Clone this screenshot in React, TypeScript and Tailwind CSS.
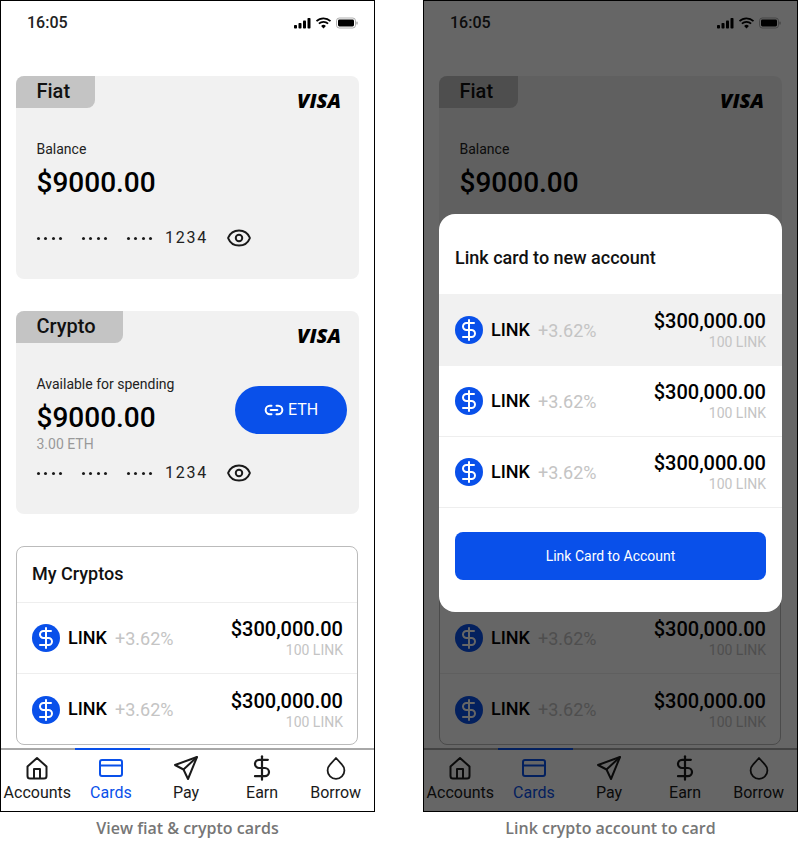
import { DollarSign, Eye, Link2 } from 'lucide-react';

function CoinIcon() {
  return (
    <div className="w-[28px] h-[28px] rounded-full bg-[#0950ea] flex items-center justify-center shrink-0">
      <DollarSign className="w-[24px] h-[24px] text-white" strokeWidth={2} />
    </div>
  );
}

function AssetRow({ className = '' }: { className?: string }) {
  return (
    <div className={`flex items-center justify-between ${className}`}>
      <div className="flex items-center">
        <CoinIcon />
        <span className="ml-[8px] pb-[2px] text-[18px] font-medium text-black">LINK</span>
        <span className="ml-[8px] text-[18px] text-[#c4c4c4]">+3.62%</span>
      </div>
      <div className="flex flex-col items-end">
        <span className="text-[20px] leading-[23px] font-medium text-black">$300,000.00</span>
        <span className="mt-[1px] text-[14px] leading-[16px] text-[#c4c4c4]">100 LINK</span>
      </div>
    </div>
  );
}

function CardNumber() {
  return (
    <div className="flex items-center h-[24px]">
      {[0, 1, 2].map((group) => (
        <div key={group} className="flex gap-[4.33px] mr-[20px]">
          {[0, 1, 2, 3].map((dot) => (
            <span key={dot} className="w-[3px] h-[3px] rounded-full bg-[#1a1a1a]" />
          ))}
        </div>
      ))}
      <span className="-ml-[7px] text-[16px] tracking-[1.8px] text-[#222]">1234</span>
      <Eye className="ml-[18px] w-[26px] h-[26px] text-[#1a1a1a]" strokeWidth={1.8} />
    </div>
  );
}

function BalanceCard({ tab, tabWidth, label, sub, action }: { tab: string; tabWidth: string; label: string; sub?: string; action?: boolean }) {
  return (
    <div className="h-[203px] bg-[#f1f1f1] rounded-[8px] overflow-hidden shrink-0">
      <div className="flex justify-between items-start">
        <div className={`h-[32px] ${tabWidth} bg-[#c4c4c4] rounded-br-[8px] pl-[20.5px] text-[20px] leading-[30px] font-medium text-[#111]`}>{tab}</div>
        <span className="mt-[13px] mr-[18px] font-['Open_Sans'] text-[20px] leading-[24px] font-extrabold italic text-black">VISA</span>
      </div>
      <div className="flex justify-between pl-[20.5px] pr-[12px] mt-[-3px]">
        <div className="pt-[31px]">
          <div className="text-[14px] leading-[16px] text-[#222]">{label}</div>
          <div className="mt-[9px] text-[28px] leading-[34px] font-medium text-black">$9000.00</div>
          <div className="h-[16px] mt-[1px] text-[14px] leading-[16px] text-[#999]">{sub}</div>
        </div>
        {action && (
          <button className="mt-[41px] w-[112px] h-[48px] rounded-full bg-[#0950ea] text-white flex items-center justify-center gap-[4px] text-[16px]">
            <Link2 className="w-[20px] h-[20px]" strokeWidth={2.4} />
            ETH
          </button>
        )}
      </div>
      <div className="pl-[21px] mt-[9px]">
        <CardNumber />
      </div>
    </div>
  );
}

function StatusIcons() {
  return (
    <svg width="64" height="12" viewBox="0 0 64 12" className="text-black">
      <rect x="0" y="8" width="3" height="3.5" rx="0.8" fill="currentColor" />
      <rect x="4.5" y="6" width="3" height="5.5" rx="0.8" fill="currentColor" />
      <rect x="9" y="3.5" width="3" height="8" rx="0.8" fill="currentColor" />
      <rect x="13.5" y="1" width="3" height="10.5" rx="0.8" fill="currentColor" />
      <path d="M22.5 4.2a10 10 0 0 1 14 0M24.9 6.7a6.5 6.5 0 0 1 9.2 0" fill="none" stroke="currentColor" strokeWidth="1.7" />
      <path d="M27.1 8.9a3.4 3.4 0 0 1 4.8 0l-2.4 2.5z" fill="currentColor" />
      <rect x="42.5" y="1" width="19" height="10" rx="2.8" fill="none" stroke="#999" strokeWidth="0.8" />
      <rect x="44" y="2.5" width="16" height="7" rx="1.4" fill="currentColor" />
      <rect x="62.4" y="4.5" width="1.2" height="3" rx="0.6" fill="#999" />
    </svg>
  );
}

function NavItem({ label, active, className = '', children }: { label: string; active?: boolean; className?: string; children: React.ReactNode }) {
  return (
    <div className={`relative flex-1 min-w-0 ${active ? 'text-[#0950ea]' : 'text-[#1a1a1a]'}`}>
      {active && <span className="absolute -top-[2px] -left-[1px] right-0 h-[2px] bg-[#0950ea]" />}
      <div className={`flex flex-col items-center pt-[5px] ${className}`}>
        <div className="h-[26px] flex items-center justify-center">{children}</div>
        <span className="mt-[2px] text-[16px] leading-[20px] whitespace-nowrap">{label}</span>
      </div>
    </div>
  );
}

function BottomNav() {
  return (
    <nav className="h-[63px] shrink-0 flex bg-white border-t-2 border-[#a8a8a8]">
      <NavItem label="Accounts" className="pr-[2px]">
        <svg width="24" height="24" viewBox="0 0 24 24" fill="none" stroke="currentColor" strokeWidth="2" strokeLinejoin="round">
          <path d="M2.5 10.5 12 2l9.5 8.5V20a2.5 2.5 0 0 1-2.5 2.5H5A2.5 2.5 0 0 1 2.5 20z" />
          <path d="M9 22.5V13h6v9.5" />
        </svg>
      </NavItem>
      <NavItem label="Cards" active className="pr-[4px]">
        <svg width="26" height="20" viewBox="0 0 26 20" fill="none" stroke="currentColor" strokeWidth="2">
          <rect x="2" y="2" width="22" height="16" rx="2" />
          <path d="M2 7.5h22" />
        </svg>
      </NavItem>
      <NavItem label="Pay" className="pr-[3px]">
        <svg width="24" height="24" viewBox="0 0 24 24" fill="none" stroke="currentColor" strokeWidth="2" strokeLinejoin="round">
          <path d="M23 1 1 9l8.5 4.5L14 23z" />
          <path d="M23 1 9.5 13.5" />
        </svg>
      </NavItem>
      <NavItem label="Earn">
        <DollarSign className="w-[28px] h-[28px]" strokeWidth={1.9} />
      </NavItem>
      <NavItem label="Borrow" className="pr-[2px]">
        <svg width="22" height="24" viewBox="0 0 22 24" fill="none" stroke="currentColor" strokeWidth="1.8" strokeLinejoin="round">
          <path d="M11 2 5 8.6a8.4 8.4 0 1 0 12 0z" />
        </svg>
      </NavItem>
    </nav>
  );
}

function PhoneScreen() {
  return (
    <>
      <div className="h-[43px] shrink-0 flex items-center justify-between pl-[26px] pr-[16px] pt-[1px]">
        <span className="text-[16px] font-medium text-[#222]">16:05</span>
        <StatusIcons />
      </div>
      <main className="flex-1 overflow-hidden flex flex-col gap-[32px] px-[15px] pt-[32px]">
        <BalanceCard tab="Fiat" tabWidth="w-[79px]" label="Balance" />
        <BalanceCard tab="Crypto" tabWidth="w-[107px]" label="Available for spending" sub="3.00 ETH" action />
        <div className="h-[199px] mr-[1px] shrink-0 border border-[#bbb] rounded-[8px] bg-white overflow-hidden">
          <div className="h-[56px] pl-[15px] pb-[2px] flex items-center text-[18px] font-medium text-[#111] border-b border-[#eee]">My Cryptos</div>
          <AssetRow className="h-[71px] pl-[15px] pr-[14px] border-b border-[#eee]" />
          <AssetRow className="h-[71px] pl-[15px] pr-[14px]" />
        </div>
      </main>
      <BottomNav />
    </>
  );
}

function Phone({ caption, children }: { caption: string; children?: React.ReactNode }) {
  return (
    <div className="w-[375px] shrink-0">
      <div className="relative h-[812px] border border-black bg-white flex flex-col overflow-hidden">
        <PhoneScreen />
        {children}
      </div>
      <p className="mt-[5px] text-center font-['Open_Sans'] text-[16px] leading-[22px] font-semibold text-[#767676]">{caption}</p>
    </div>
  );
}

export default function App() {
  return (
    <div className="w-[798px] h-[845px] bg-white flex gap-[48px] overflow-hidden font-['Roboto',sans-serif]">
      <Phone caption="View fiat & crypto cards" />
      <Phone caption="Link crypto account to card">
        {/* dimmed backdrop and sheet */}
        <div className="absolute inset-0 bg-black/60 flex items-start justify-center pt-[213px]">
          <div className="w-[343px] h-[398px] bg-white rounded-[16px] overflow-hidden">
            <div className="h-[80px] pl-[16px] flex items-center pt-[6px] text-[18px] font-medium text-[#111]">Link card to new account</div>
            <AssetRow className="h-[72px] px-[16px] bg-[#f1f1f1]" />
            <AssetRow className="h-[71px] px-[16px] border-b border-[#eee]" />
            <AssetRow className="h-[71px] px-[16px] border-b border-[#eee]" />
            <div className="px-[16px] pt-[24px]">
              <button className="w-full h-[48px] rounded-[8px] bg-[#0950ea] text-white text-[14px]">Link Card to Account</button>
            </div>
          </div>
        </div>
      </Phone>
    </div>
  );
}
